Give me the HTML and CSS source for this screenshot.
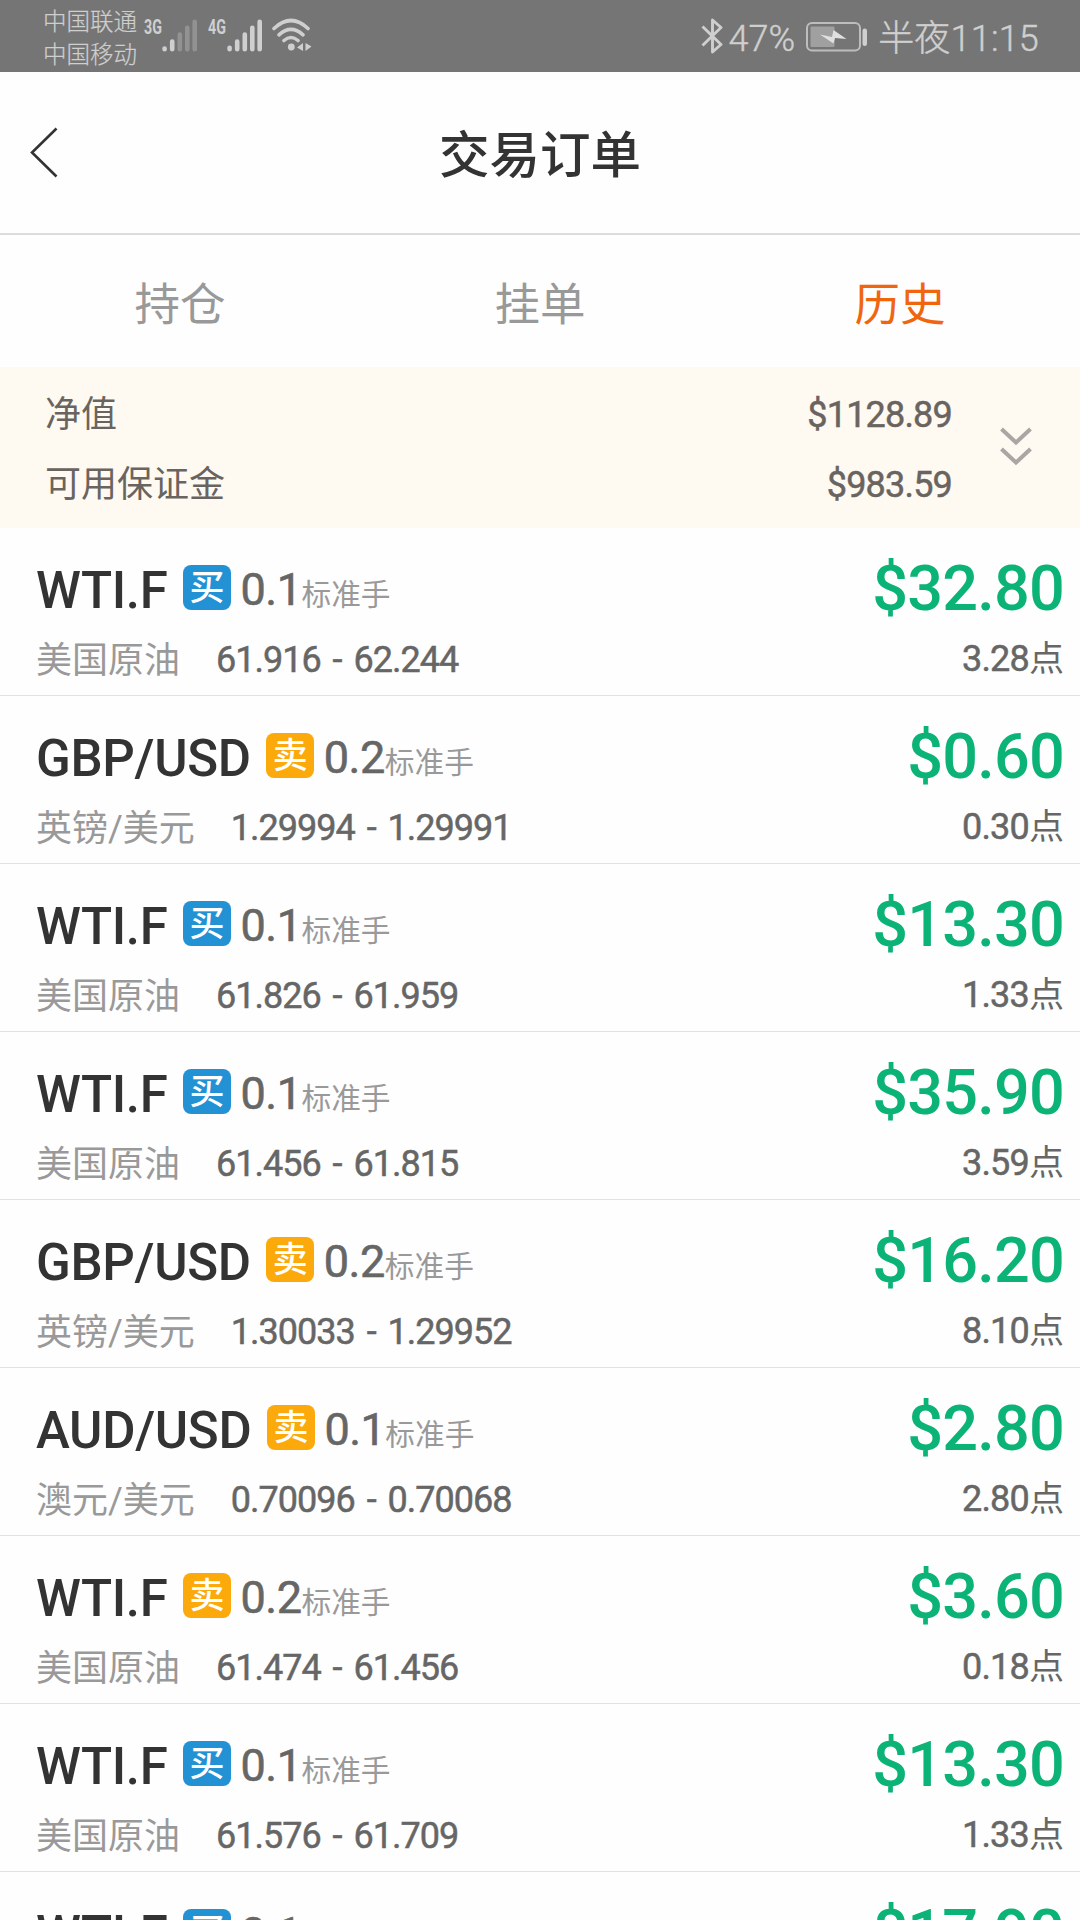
FILE: index.html
```html
<!DOCTYPE html>
<html lang="zh-CN">
<head>
<meta charset="utf-8">
<title>交易订单</title>
<link rel="stylesheet" href="styles.css">
</head>
<body>
<div class="status">
  <div class="carriers"><span>中国联通</span><span>中国移动</span></div>
  <div class="net net-3g">3G</div>
  <svg class="bars" width="36" height="34" viewBox="0 0 36 34" stroke="#cfcfcf" stroke-width="4.6" stroke-linecap="round"><path d="M2.6 30.2v-.6M10.2 30.2V22.5"/><path d="M17.8 30.2V15.5M25.3 30.2V8.8M32.7 30.2V2.8" stroke="#929292"/></svg>
  <div class="net net-4g">4G</div>
  <svg class="bars" width="36" height="34" viewBox="0 0 36 34" stroke="#cfcfcf" stroke-width="4.6" stroke-linecap="round"><path d="M2.6 30.2v-1.5M10.2 30.2V22.5M17.8 30.2V15.5M25.3 30.2V8.8M32.7 30.2V2.8"/></svg>
  <svg class="wifi" width="40" height="34" viewBox="0 0 40 34" fill="none" stroke="#cfcfcf" stroke-width="3.6" stroke-linecap="round"><path d="M2 10.5Q19 -5.500 36 10.500M7 16.800Q19 6 31 16.800M12 22.500Q19 16.500 26 22.500"/><circle cx="19.300" cy="29" r="3.400" fill="#cfcfcf" stroke="none"/><path d="M31 25v8l-6-3.500zM33.500 25l6 3.500-6 4.500z" fill="#cfcfcf" stroke="none"/></svg>
  <div class="spacer"></div>
  <svg class="bt" width="22" height="36" viewBox="0 0 22 36" fill="none" stroke="#cfcfcf" stroke-width="2.900" stroke-linejoin="round"><path d="M1.500 8.500L20 26.500L11.500 34V2L20 9.500L1.500 27.500"/></svg>
  <div class="status-text">47%</div>
  <svg class="battery" width="62" height="30" viewBox="0 0 62 30"><rect x="1" y="1" width="53" height="27.500" rx="5" fill="none" stroke="#bdbdbd" stroke-width="2"/><rect x="4.500" y="4.500" width="24" height="20.500" rx="1" fill="#a0a0a0"/><rect x="56.500" y="6.500" width="4.500" height="17.500" rx="2.200" fill="#cfcfcf"/><path d="M14 12.500L26 15L27.500 8L40.500 17L29 16L27.500 21.500z" fill="#e0e0e0"/></svg>
  <div class="status-text time">半夜11:15</div>
</div>
<header class="header">
  <svg class="back" width="30" height="52" viewBox="0 0 30 52" fill="none" stroke="#333" stroke-width="2.600"><path d="M27.500 1.500L3 25.500L27.500 49.500"/></svg>
  <h1 class="title">交易订单</h1>
</header>
<nav class="tabs">
  <div class="tab">持仓</div>
  <div class="tab">挂单</div>
  <div class="tab active">历史</div>
</nav>
<section class="summary">
  <div class="sum-lines">
    <div class="sum-line"><span>净值</span><span class="sum-value">$1128.89</span></div>
    <div class="sum-line"><span>可用保证金</span><span class="sum-value">$983.59</span></div>
  </div>
  <svg class="expand" width="34" height="42" viewBox="0 0 34 42" fill="none" stroke="#aaa6a3" stroke-width="4"><path d="M2.500 3L17 16.500L31.500 3M2.500 23L17 36.500L31.500 23"/></svg>
</section>
<main class="orders">
  <article class="order">
    <div class="info">
      <div class="line"><span class="symbol">WTI.F</span><span class="side buy">买</span><span class="lots">0.1</span><span class="unit">标准手</span></div>
      <div class="detail"><span class="name">美国原油</span><span class="range">61.916 - 62.244</span></div>
    </div>
    <div class="result"><div class="profit">$32.80</div><div class="points">3.28<span>点</span></div></div>
  </article>
  <article class="order">
    <div class="info">
      <div class="line"><span class="symbol">GBP/USD</span><span class="side sell">卖</span><span class="lots">0.2</span><span class="unit">标准手</span></div>
      <div class="detail"><span class="name">英镑/美元</span><span class="range">1.29994 - 1.29991</span></div>
    </div>
    <div class="result"><div class="profit">$0.60</div><div class="points">0.30<span>点</span></div></div>
  </article>
  <article class="order">
    <div class="info">
      <div class="line"><span class="symbol">WTI.F</span><span class="side buy">买</span><span class="lots">0.1</span><span class="unit">标准手</span></div>
      <div class="detail"><span class="name">美国原油</span><span class="range">61.826 - 61.959</span></div>
    </div>
    <div class="result"><div class="profit">$13.30</div><div class="points">1.33<span>点</span></div></div>
  </article>
  <article class="order">
    <div class="info">
      <div class="line"><span class="symbol">WTI.F</span><span class="side buy">买</span><span class="lots">0.1</span><span class="unit">标准手</span></div>
      <div class="detail"><span class="name">美国原油</span><span class="range">61.456 - 61.815</span></div>
    </div>
    <div class="result"><div class="profit">$35.90</div><div class="points">3.59<span>点</span></div></div>
  </article>
  <article class="order">
    <div class="info">
      <div class="line"><span class="symbol">GBP/USD</span><span class="side sell">卖</span><span class="lots">0.2</span><span class="unit">标准手</span></div>
      <div class="detail"><span class="name">英镑/美元</span><span class="range">1.30033 - 1.29952</span></div>
    </div>
    <div class="result"><div class="profit">$16.20</div><div class="points">8.10<span>点</span></div></div>
  </article>
  <article class="order">
    <div class="info">
      <div class="line"><span class="symbol">AUD/USD</span><span class="side sell">卖</span><span class="lots">0.1</span><span class="unit">标准手</span></div>
      <div class="detail"><span class="name">澳元/美元</span><span class="range">0.70096 - 0.70068</span></div>
    </div>
    <div class="result"><div class="profit">$2.80</div><div class="points">2.80<span>点</span></div></div>
  </article>
  <article class="order">
    <div class="info">
      <div class="line"><span class="symbol">WTI.F</span><span class="side sell">卖</span><span class="lots">0.2</span><span class="unit">标准手</span></div>
      <div class="detail"><span class="name">美国原油</span><span class="range">61.474 - 61.456</span></div>
    </div>
    <div class="result"><div class="profit">$3.60</div><div class="points">0.18<span>点</span></div></div>
  </article>
  <article class="order">
    <div class="info">
      <div class="line"><span class="symbol">WTI.F</span><span class="side buy">买</span><span class="lots">0.1</span><span class="unit">标准手</span></div>
      <div class="detail"><span class="name">美国原油</span><span class="range">61.576 - 61.709</span></div>
    </div>
    <div class="result"><div class="profit">$13.30</div><div class="points">1.33<span>点</span></div></div>
  </article>
  <article class="order">
    <div class="info">
      <div class="line"><span class="symbol">WTI.F</span><span class="side buy">买</span><span class="lots">0.1</span></div>
    </div>
    <div class="result"><div class="profit">$17.90</div></div>
  </article>
</main>
</body>
</html>
```
FILE: styles.css
```css
* { box-sizing: border-box; }
body {
  margin: 0;
  width: 1080px;
  height: 1920px;
  overflow: hidden;
  display: flex;
  flex-direction: column;
  background: #fefefe;
  font-family: Roboto, "Noto Sans CJK SC", sans-serif;
  color: #666;
}
svg { display: block; flex: none; }
span, .status-text, .net { white-space: nowrap; }

.status {
  flex: none;
  height: 72px;
  background: #757575;
  color: #cfcfcf;
  display: flex;
  padding: 0 41px 0 43px;
}
.carriers {
  width: 101px;
  padding-top: 6px;
  display: flex;
  flex-direction: column;
  font-size: 23.5px;
  font-weight: 300;
  line-height: 33px;
  -webkit-text-stroke: .2px;
}
.net {
  width: 18px;
  margin-top: 17px;
  font-size: 21px;
  line-height: 21px;
  font-weight: 700;
  transform: scaleX(.68);
  transform-origin: 0 0;
}
.net-4g { margin-left: 10px; width: 19px; }
.bars { margin-top: 19px; }
.wifi { margin: 18px 0 0 9px; }
.spacer { flex: 1; }
.bt { margin: 18px 6px 0 0; }
.status-text { font-size: 36px; line-height: 50px; padding-top: 14px; font-weight: 300; -webkit-text-stroke: .4px; }
.time { letter-spacing: .2px; }
.battery { margin: 22px 10px 0 11px; }

.header {
  flex: none;
  height: 163px;
  border-bottom: 2px solid #dcdcdc;
  display: grid;
  grid-template-columns: 58px 1fr 58px;
  padding-top: 44px;
}
.back { margin: 11px 0 0 29px; }
.title { margin: 0; text-align: center; font-size: 50.5px; line-height: 80px; font-weight: 500; color: #333; }

.tabs { flex: none; height: 132px; display: grid; grid-template-columns: repeat(3, 1fr); }
.tab { text-align: center; font-size: 45.5px; line-height: 141px; color: #999; }
.active { color: #f0660f; }

.summary {
  flex: none;
  height: 161px;
  background: #fef9f1;
  display: flex;
  padding: 14px 47px 0 45px;
}
.sum-lines { flex: 1; }
.sum-line { display: flex; justify-content: space-between; font-size: 36px; line-height: 69.5px; color: #69645f; }
.sum-value { letter-spacing: -.8px; -webkit-text-stroke: .5px; }
.expand { margin: 45px 0 0 47px; }

.orders { flex: 1; min-height: 0; overflow: hidden; }
.order {
  height: 168px;
  border-bottom: 1px solid #e3e3e3;
  display: flex;
  justify-content: space-between;
  padding: 32px 16px 0 36px;
}
.line { display: flex; align-items: center; height: 60px; line-height: 60px; }
.symbol { font-size: 51px; font-weight: 500; color: #333; letter-spacing: -.3px; padding-top: 1px; }
.side {
  width: 48px;
  height: 45px;
  margin: 0 9.5px 5px 15.5px;
  border-radius: 8px;
  color: #fff;
  font-size: 35px;
  line-height: 48px;
  font-weight: 500;
  text-align: center;
}
.buy { background: #2292d4; }
.sell { background: #fca90b; }
.lots { font-size: 45px; margin-top: -1px; letter-spacing: -.5px; -webkit-text-stroke: .6px; }
.unit { font-size: 29.7px; color: #999; padding-top: 10px; }
.detail { display: flex; margin-top: 16px; font-size: 36px; line-height: 48px; }
.name { color: #999; padding-top: 1px; }
.range { margin-left: 36px; letter-spacing: -1px; word-spacing: 4px; -webkit-text-stroke: .5px; }
.result { text-align: right; }
.profit { font-size: 63px; line-height: 60px; font-weight: 500; color: #0cb377; letter-spacing: -.8px; margin-top: -1px; }
.points { margin-top: 16px; font-size: 36px; line-height: 48px; letter-spacing: -.8px; -webkit-text-stroke: .5px; }
.points span { letter-spacing: 0; font-size: 35px; -webkit-text-stroke: 0; }
```
